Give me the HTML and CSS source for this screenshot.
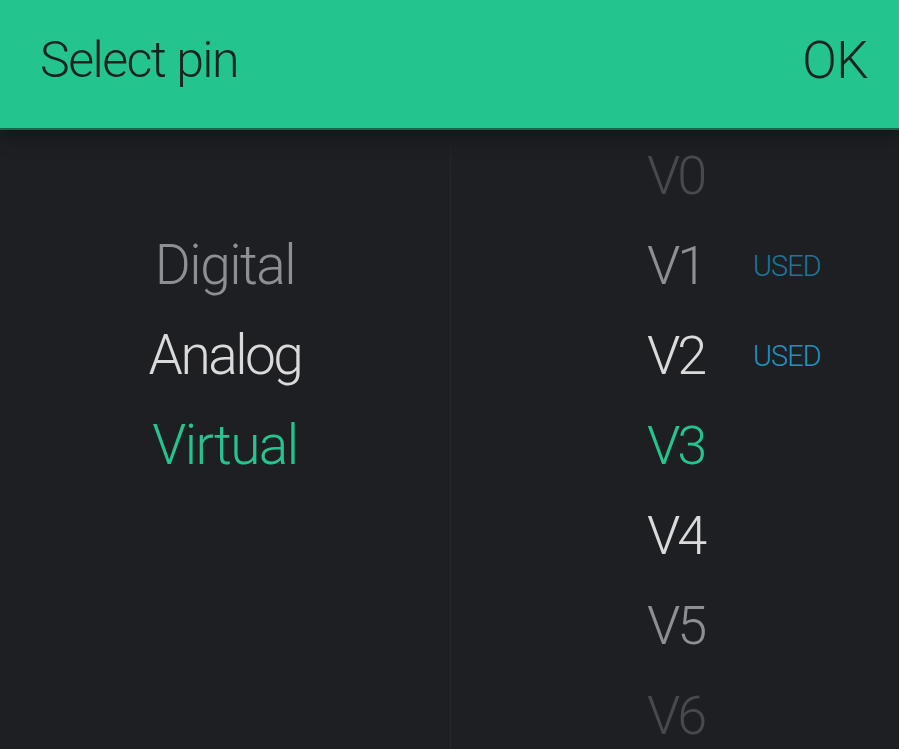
FILE: index.html
```html
<!DOCTYPE html>
<html lang="en">
<head>
  <meta charset="UTF-8">
  <meta name="viewport" content="width=device-width, initial-scale=1.0">
  <title>Select pin</title>
  <link rel="stylesheet" href="styles.css">
</head>
<body>
  <div class="dialog">
    <header class="header">
      <span class="title">Select pin</span>
      <button class="ok">OK</button>
    </header>
    <div class="picker">
      <div class="column types">
        <div class="row faded-1">Digital</div>
        <div class="row near">Analog</div>
        <div class="row selected">Virtual</div>
      </div>
      <div class="column pins">
        <div class="row faded-2"><span class="pin">V0</span></div>
        <div class="row faded-1"><span class="pin">V1</span><span class="used dim">USED</span></div>
        <div class="row near"><span class="pin">V2</span><span class="used">USED</span></div>
        <div class="row selected"><span class="pin">V3</span></div>
        <div class="row near"><span class="pin">V4</span></div>
        <div class="row faded-1"><span class="pin">V5</span></div>
        <div class="row faded-2"><span class="pin">V6</span></div>
      </div>
    </div>
  </div>
</body>
</html>
```

FILE: styles.css
```css
body {
  margin: 0;
  background-color: #1e1f23;
  font-family: Roboto, "DejaVu Sans Condensed", sans-serif;
  font-weight: 300;
  overflow: hidden;
}
.dialog {
  width: 899px;
  height: 749px;
  display: flex;
  flex-direction: column;
}
.header {
  height: 128px;
  flex-shrink: 0;
  display: flex;
  align-items: center;
  justify-content: space-between;
  padding: 0 31px 0 40px;
  background-color: #24c48e;
  border-bottom: 2px solid #14694d;
  box-shadow: 0 6px 18px rgba(0, 0, 0, 0.35);
  position: relative;
  z-index: 1;
}
.title {
  font-size: 50px;
  color: #17231f;
  letter-spacing: -1.5px;
  padding-bottom: 8px;
}
.ok {
  font-family: inherit;
  font-weight: 300;
  font-size: 51px;
  color: #17231f;
  letter-spacing: -0.5px;
  background: none;
  border: none;
  padding: 0 0 8px;
  cursor: pointer;
}
.picker {
  flex: 1;
  display: flex;
}
.column {
  display: flex;
  flex-direction: column;
}
.types {
  width: 450px;
  padding-top: 90px;
  border-right: 1px solid #26272b;
  border-image: linear-gradient(to bottom, transparent, #28292d 50px) 1;
  align-items: center;
}
.pins {
  flex: 1;
  padding-left: 196px;
}
.row {
  height: 90px;
  display: flex;
  align-items: center;
  font-size: 55px;
  letter-spacing: -1.5px;
}
.types .row:nth-child(2) {
  letter-spacing: -2.5px;
}
.pin {
  width: 106px;
  font-size: 54px;
  letter-spacing: -3px;
}
.used {
  font-size: 29px;
  letter-spacing: -1px;
  color: #2291bd;
  padding-top: 2px;
}
.used.dim {
  color: #1d7597;
}
.faded-2 {
  color: #48494d;
}
.faded-1 {
  color: #8e8f92;
}
.near {
  color: #dadadc;
}
.selected {
  color: #24c48e;
}
```
